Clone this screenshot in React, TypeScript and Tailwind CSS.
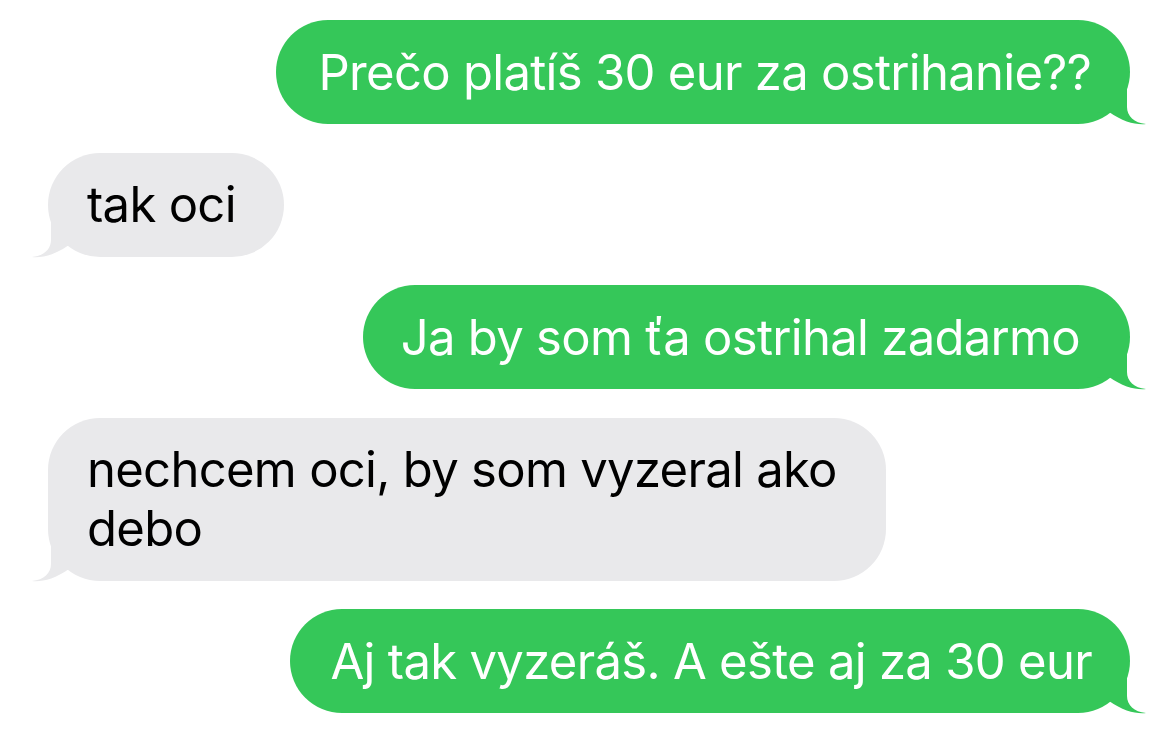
import React from "react";

type Msg = { from: "me" | "them"; text: string; pad: string };

const messages: Msg[] = [
  { from: "me", text: "Prečo platíš 30 eur za ostrihanie??", pad: "pl-[43px] pr-[39px]" },
  { from: "them", text: "tak oci", pad: "pl-[39px] pr-[48px]" },
  { from: "me", text: "Ja by som ťa ostrihal zadarmo", pad: "pl-[38px] pr-[50px]" },
  { from: "them", text: "nechcem oci, by som vyzeral ako debo", pad: "pl-[39px] pr-[48px]" },
  { from: "me", text: "Aj tak vyzeráš. A ešte aj za 30 eur", pad: "pl-[40px] pr-[38px]" },
];

// bubble tail, drawn for the right side; mirrored for incoming messages
const Tail = ({ color, mirror }: { color: string; mirror?: boolean }) => (
  <svg
    width="50"
    height="52"
    viewBox="0 0 50 52"
    className={`absolute bottom-[-1px] ${mirror ? "left-[-17px] -scale-x-100" : "right-[-17px]"}`}
  >
    <path d="M30 0 L30 34 C30 43 37 50 49 51 C39 52 26 49 12 39 L0 40 L0 0 Z" fill={color} />
  </svg>
);

const Bubble = ({ msg }: { msg: Msg }) => {
  const me = msg.from === "me";
  const color = me ? "#35c759" : "#e9e9eb";
  return (
    <div className={`flex ${me ? "justify-end" : "justify-start"}`}>
      <div
        className={`relative w-fit rounded-[52px] py-[22.5px] text-[49px] leading-[59px] tracking-[-0.7px] ${msg.pad} ${
          me ? "bg-[#35c759] text-white" : "max-w-[838px] bg-[#e9e9eb] text-black"
        }`}
      >
        <span className="relative z-10 whitespace-pre-wrap">{msg.text}</span>
        <Tail color={color} mirror={!me} />
      </div>
    </div>
  );
};

export default function App() {
  return (
    <div
      className="w-[1174px] h-[731px] overflow-hidden bg-white pt-[20px] pl-[48px] pr-[44px] flex flex-col gap-[28.5px]"
      style={{ fontFamily: "Inter, 'Liberation Sans', sans-serif" }}
    >
      {messages.map((m, i) => (
        <Bubble key={i} msg={m} />
      ))}
    </div>
  );
}
